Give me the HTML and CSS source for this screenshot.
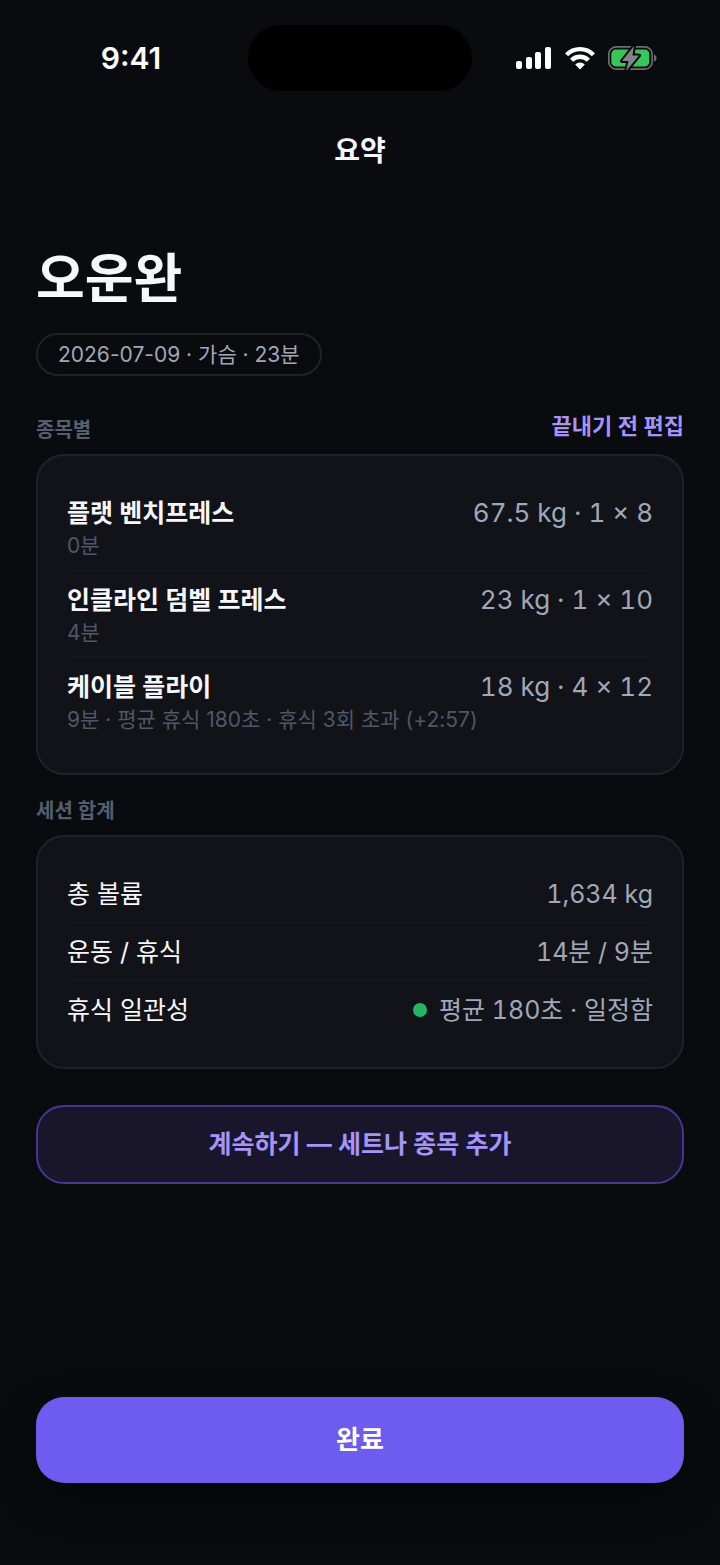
FILE: index.html
```html
<!DOCTYPE html>
<html lang="ko">
<head>
  <meta charset="UTF-8">
  <meta name="viewport" content="width=device-width, initial-scale=1">
  <title>요약</title>
  <link rel="stylesheet" href="styles.css">
</head>
<body>
  <div class="status-bar">
    <span class="time">9:41</span>
    <div class="island"></div>
    <div class="status-icons">
      <svg width="36" height="24" viewBox="0 0 36 24" fill="#fff" aria-hidden="true">
        <rect x="0" y="15" width="6" height="8" rx="2"/>
        <rect x="10" y="11" width="6" height="12" rx="2"/>
        <rect x="19" y="6" width="6" height="17" rx="2"/>
        <rect x="29" y="1" width="6" height="22" rx="2"/>
      </svg>
      <svg width="30" height="24" viewBox="0 0 30 24" aria-hidden="true">
        <g fill="none" stroke="#fff" stroke-width="4.4">
          <path d="M1.6 8.7a19 19 0 0 1 26.8 0"/>
          <path d="M6.6 14.2a12 12 0 0 1 16.8 0"/>
        </g>
        <path d="M15 23.4l-4.8-4.9a7 7 0 0 1 9.6 0z" fill="#fff"/>
      </svg>
      <svg width="50" height="28" viewBox="0 0 50 28" aria-hidden="true">
        <rect x="0.8" y="2.8" width="43.4" height="22.4" rx="7.5" fill="none" stroke="#6d6d70" stroke-width="1.7"/>
        <path d="M46 10.5c3.4 1 3.4 6 0 7z" fill="#6d6d70"/>
        <rect x="3.3" y="5.6" width="38" height="16.8" rx="4.5" fill="#34c759"/>
        <path d="M26 2L14 17h6.5L18.2 27 31 11.5h-6.5z" fill="#838388" stroke="#0a0b0e" stroke-width="4" stroke-linejoin="round" paint-order="stroke"/>
      </svg>
    </div>
  </div>

  <header class="nav">요약</header>

  <main class="content">
    <h1>오운완</h1>
    <p class="pill">2026-07-09 · 가슴 · 23분</p>

    <div class="section-head">
      <h2>종목별</h2>
      <a class="edit-link" href="#">끝내기 전 편집</a>
    </div>
    <ul class="card">
      <li class="exercise">
        <div class="row">
          <span class="name">플랫 벤치프레스</span>
          <span class="value">67.5 kg · 1 × 8</span>
        </div>
        <div class="detail">0분</div>
      </li>
      <li class="exercise">
        <div class="row">
          <span class="name">인클라인 덤벨 프레스</span>
          <span class="value">23 kg · 1 × 10</span>
        </div>
        <div class="detail">4분</div>
      </li>
      <li class="exercise">
        <div class="row">
          <span class="name">케이블 플라이</span>
          <span class="value">18 kg · 4 × 12</span>
        </div>
        <div class="detail">9분 · 평균 휴식 180초 · 휴식 3회 초과 (+2:57)</div>
      </li>
    </ul>

    <div class="section-head totals-head">
      <h2>세션 합계</h2>
    </div>
    <dl class="card">
      <div class="row total">
        <dt>총 볼륨</dt>
        <dd>1,634 kg</dd>
      </div>
      <div class="row total">
        <dt>운동 / 휴식</dt>
        <dd>14분 / 9분</dd>
      </div>
      <div class="row total">
        <dt>휴식 일관성</dt>
        <dd><span class="dot"></span>평균 180초 · 일정함</dd>
      </div>
    </dl>

    <button class="btn btn-continue" type="button">계속하기 — 세트나 종목 추가</button>
    <button class="btn btn-done" type="button">완료</button>
  </main>
</body>
</html>
```

FILE: styles.css
```css
* {
  box-sizing: border-box;
  margin: 0;
  padding: 0;
}

body {
  font-family: Inter, "Noto Sans CJK KR", sans-serif;
  background: #0a0b0e;
  color: #f5f7fb;
  min-height: 100vh;
  display: flex;
  flex-direction: column;
}

.status-bar {
  display: grid;
  grid-template-columns: 1fr 224px 1fr;
  align-items: center;
  padding-top: 25px;
}

.time {
  padding-left: 14px;
  text-align: center;
  font-size: 30px;
  font-weight: 600;
  color: #fff;
}

.island {
  height: 66px;
  border-radius: 33px;
  background: #000;
}

.status-icons {
  display: flex;
  align-items: center;
  gap: 13px;
  padding-left: 44px;
}

.nav {
  padding-top: 40px;
  text-align: center;
  font-size: 28px;
  line-height: 40px;
  font-weight: 600;
}

.content {
  flex: 1;
  display: flex;
  flex-direction: column;
  padding: 66px 36px 82px;
}

h1 {
  font-size: 53px;
  line-height: 84px;
  font-weight: 700;
}

.pill {
  align-self: flex-start;
  margin-top: 12px;
  padding: 0 20px;
  border: 2px solid #20222a;
  border-radius: 22px;
  font-size: 21px;
  line-height: 39px;
  color: #a0a7b8;
}

.section-head {
  display: flex;
  justify-content: space-between;
  align-items: flex-end;
  margin-top: 34px;
  padding-bottom: 12px;
}

.totals-head {
  margin-top: 24px;
}

h2 {
  font-size: 20px;
  line-height: 24px;
  font-weight: 600;
  color: #565e6e;
}

.edit-link {
  font-size: 22px;
  line-height: 32px;
  font-weight: 600;
  color: #a594fa;
  text-decoration: none;
}

.card {
  padding: 28px 29px;
  background: #121318;
  border: 2px solid #20222a;
  border-radius: 28px;
  list-style: none;
}

.row {
  display: flex;
  justify-content: space-between;
  font-size: 25px;
  line-height: 34px;
}

.exercise {
  padding: 12px 0 10px;
  border-bottom: 1px solid #17191d;
}

.total {
  padding: 12px 0 11px;
  border-bottom: 1px solid #17191d;
}

.exercise:last-child,
.total:last-child {
  border-bottom-color: transparent;
}

.name {
  font-weight: 600;
}

.value,
.total dd {
  font-variant-numeric: tabular-nums;
  color: #a0a7b8;
}

.value {
  font-size: 26px;
}

.total dd {
  display: flex;
  align-items: center;
}

.detail {
  margin-top: 2px;
  font-size: 21px;
  line-height: 28px;
  color: #4f5768;
}

.dot {
  width: 14px;
  height: 14px;
  margin-right: 12px;
  border-radius: 50%;
  background: #22b566;
}

.btn {
  width: 100%;
  border-radius: 28px;
  font-family: inherit;
  font-weight: 600;
  cursor: pointer;
}

.btn-continue {
  margin-top: 36px;
  padding: 20px;
  font-size: 25px;
  line-height: 35px;
  background: #19162c;
  border: 2px solid #46378f;
  color: #a594fa;
}

.btn-done {
  margin-top: auto;
  padding: 24px;
  font-size: 26px;
  line-height: 38px;
  background: #6e5cf0;
  border: none;
  color: #fff;
  box-shadow: 0 16px 40px rgba(0, 0, 0, 0.4);
}
```
